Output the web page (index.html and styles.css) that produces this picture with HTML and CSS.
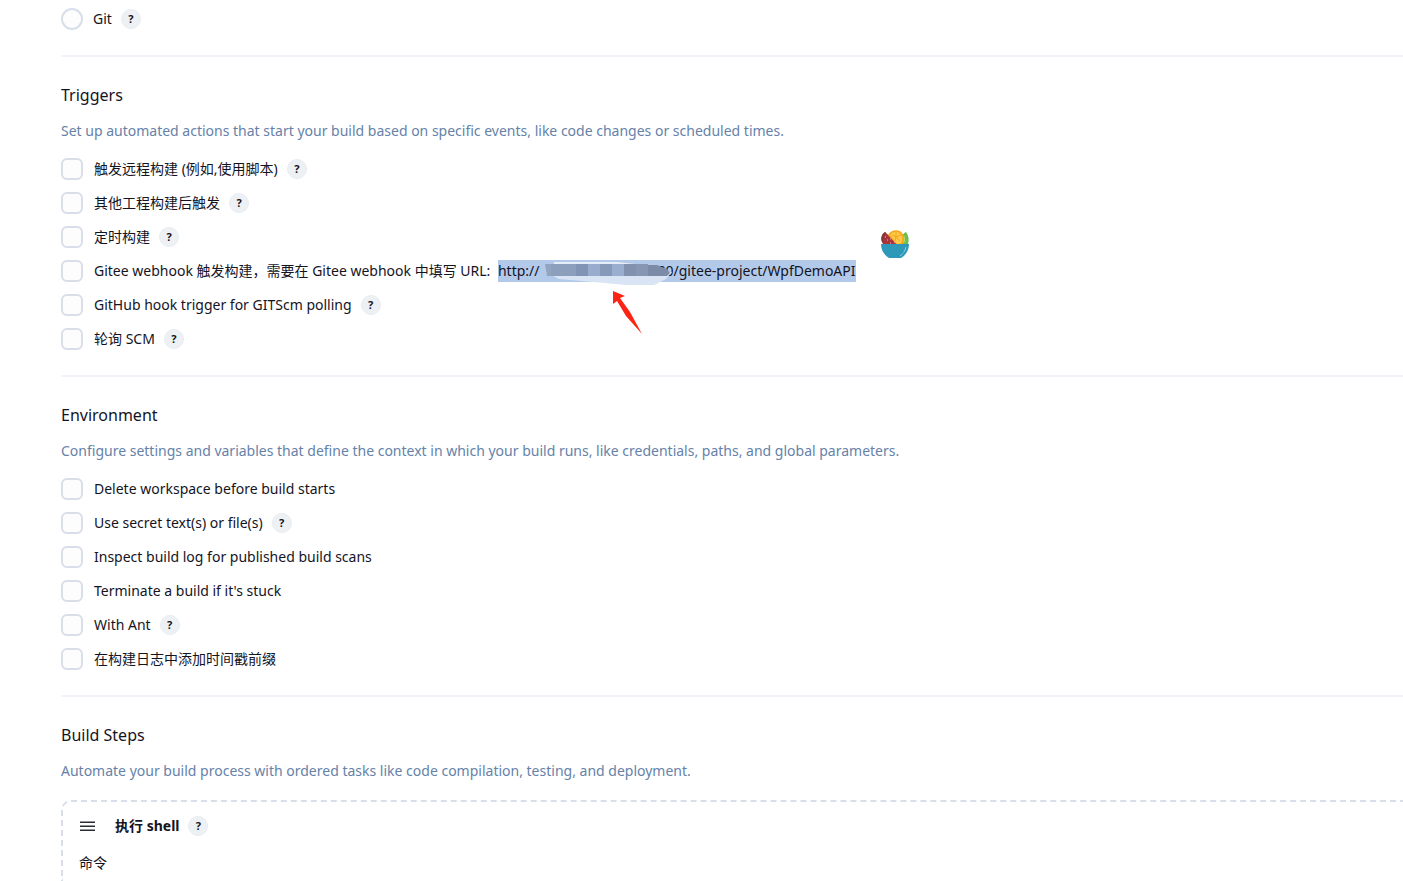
FILE: index.html
```html
<!DOCTYPE html>
<html lang="zh-CN">
<head>
    <meta charset="UTF-8">
    <meta name="viewport" content="width=device-width, initial-scale=1.0">
    <title>Config</title>
    <link rel="stylesheet" href="styles.css">
</head>
<body>
    <main class="config">
        <div class="scm">
            <div class="option">
                <input type="radio" class="radio" id="scm-git" name="scm">
                <label for="scm-git">Git</label>
                <button type="button" class="help">?</button>
            </div>
        </div>

        <section class="section">
            <h2 class="section-title">Triggers</h2>
            <p class="section-desc">Set up automated actions that start your build based on specific events, like code changes or scheduled times.</p>
            <div class="options">
                <div class="option">
                    <input type="checkbox" class="checkbox" id="remote">
                    <label for="remote">触发远程构建 (例如,使用脚本)</label>
                    <button type="button" class="help">?</button>
                </div>
                <div class="option">
                    <input type="checkbox" class="checkbox" id="upstream">
                    <label for="upstream">其他工程构建后触发</label>
                    <button type="button" class="help">?</button>
                </div>
                <div class="option">
                    <input type="checkbox" class="checkbox" id="timer">
                    <label for="timer">定时构建</label>
                    <button type="button" class="help">?</button>
                </div>
                <div class="option">
                    <input type="checkbox" class="checkbox" id="gitee">
                    <label for="gitee">Gitee webhook 触发构建，需要在 Gitee webhook 中填写 URL: <span class="url">http://<span class="masked"></span>80/gitee-project/WpfDemoAPI<svg class="mosaic" width="128" height="26" viewBox="0 0 128 26">
                        <path d="M9 2h63l18 2h-81z" fill="#e6edf8"/>
                        <path d="M0 12l14 7 34 3 34 3h27l12-6 6-7z" fill="#d9e4f5"/>
                        <path d="M0 4h6v12H2z" fill="#93a4c0"/>
                        <path d="M6 4h25v12H6z" fill="#8c9fbd"/>
                        <path d="M31 4h12v12H31z" fill="#8294b4"/>
                        <path d="M43 4h12v12H43z" fill="#99acce"/>
                        <path d="M55 4h12v12H55z" fill="#8799b8"/>
                        <path d="M67 4h12v12H67z" fill="#9aaed0"/>
                        <path d="M79 4h12v12H79z" fill="#8191ae"/>
                        <path d="M91 4h12v12H91z" fill="#8696b3"/>
                        <path d="M103 5h9l10 4 3 4-3 3h-19z" fill="#7b8ba8"/>
                    </svg><svg class="arrow" width="32" height="46" viewBox="0 0 32 46">
                        <path d="M1 1l12 5-5 2 10 14 12 22-16-18L5 11l-4 3z" fill="#fc2414"/>
                    </svg><svg class="bowl" width="28" height="30" viewBox="0 0 28 30">
                        <path d="M2 15C-1 9 1 5 4 3l14 13z" fill="#a8343c"/>
                        <path d="M1 13C-1 9 1 5 4 3l1 1C2 7 2 10 3 15z" fill="#7c3a3a"/>
                        <path d="M19 15c0-6 2-10 6-12 3 4 3 8 2 12z" fill="#6bbd50"/>
                        <path d="M23 7l1 6M21 10l2 4" stroke="#b7e27e" fill="none"/>
                        <path d="M7 6c3-6 14-7 16 2 1 3-1 6-2 8h-5z" fill="#f7a81b"/>
                        <path d="M9 6c3-4 10-5 12 2 1 3-1 5-2 7h-3z" fill="#ffca4a"/>
                        <path d="M15 3v5l-4-2m4 2l5-2m-5 2l4 4m-4-4l-1 4" stroke="#f3a51b" fill="none"/>
                        <path d="M4 8h1m1 3h1m2-1h1m-1 4h1m3-1h1" stroke="#f2b5ac"/>
                        <path d="M0 15h28c0 6-3 11-8 14H8C3 26 0 21 0 15z" fill="#2d98b8"/>
                        <path d="M25 18c-1 4-3 7-6 9" stroke="#8fd0df" fill="none" stroke-dasharray="6 1"/>
                    </svg></span></label>
                </div>
                <div class="option">
                    <input type="checkbox" class="checkbox" id="github">
                    <label for="github">GitHub hook trigger for GITScm polling</label>
                    <button type="button" class="help">?</button>
                </div>
                <div class="option">
                    <input type="checkbox" class="checkbox" id="poll">
                    <label for="poll">轮询 SCM</label>
                    <button type="button" class="help">?</button>
                </div>
            </div>
        </section>

        <section class="section">
            <h2 class="section-title">Environment</h2>
            <p class="section-desc">Configure settings and variables that define the context in which your build runs, like credentials, paths, and global parameters.</p>
            <div class="options">
                <div class="option">
                    <input type="checkbox" class="checkbox" id="cleanup">
                    <label for="cleanup">Delete workspace before build starts</label>
                </div>
                <div class="option">
                    <input type="checkbox" class="checkbox" id="secret">
                    <label for="secret">Use secret text(s) or file(s)</label>
                    <button type="button" class="help">?</button>
                </div>
                <div class="option">
                    <input type="checkbox" class="checkbox" id="scans">
                    <label for="scans">Inspect build log for published build scans</label>
                </div>
                <div class="option">
                    <input type="checkbox" class="checkbox" id="stuck">
                    <label for="stuck">Terminate a build if it's stuck</label>
                </div>
                <div class="option">
                    <input type="checkbox" class="checkbox" id="ant">
                    <label for="ant">With Ant</label>
                    <button type="button" class="help">?</button>
                </div>
                <div class="option">
                    <input type="checkbox" class="checkbox" id="timestamps">
                    <label for="timestamps">在构建日志中添加时间戳前缀</label>
                </div>
            </div>
        </section>

        <section class="section section-steps">
            <h2 class="section-title">Build Steps</h2>
            <p class="section-desc">Automate your build process with ordered tasks like code compilation, testing, and deployment.</p>
            <div class="step">
                <div class="step-header">
                    <svg class="handle" width="18" height="18" viewBox="0 0 18 18">
                        <path d="M1 5.2h15M1 9.2h15M1 13.2h15" stroke="#2b2b38" stroke-width="1.5" fill="none"/>
                    </svg>
                    <h3 class="step-title">执行 shell</h3>
                    <button type="button" class="help">?</button>
                </div>
                <div class="step-label">命令</div>
            </div>
        </section>
    </main>
</body>
</html>
```
FILE: styles.css
```css
* {
    box-sizing: border-box;
}
body {
    margin: 0;
    background-color: #fff;
    color: #14141f;
    font-family: "Noto Sans", "Noto Sans CJK SC", sans-serif;
    font-size: 14px;
    line-height: 22px;
}
.config {
    display: flex;
    flex-direction: column;
    height: 100vh;
    padding-left: 61px;
    overflow: hidden;
}
.scm {
    padding: 8px 0 25px;
}
.section {
    flex-shrink: 0;
    border-top: 2px solid #f2f2f8;
    padding: 26px 0 25px;
}
.section-title {
    margin: 0 0 13px;
    font-size: 16px;
    font-weight: 400;
    line-height: 24px;
}
.section-desc {
    margin: 0 0 16px;
    color: #6682a8;
}
.options {
    display: flex;
    flex-direction: column;
    gap: 12px;
}
.option {
    display: flex;
    align-items: center;
    height: 22px;
    white-space: nowrap;
}
.checkbox, .radio {
    appearance: none;
    flex-shrink: 0;
    width: 22px;
    height: 22px;
    margin: 0 11px 0 0;
    border: 2px solid #d8deea;
    border-radius: 6px;
    background-color: #fdfdfe;
}
.radio {
    margin-right: 10px;
    border-radius: 50%;
}
.help {
    flex-shrink: 0;
    width: 20px;
    height: 20px;
    margin-left: 9px;
    padding: 0;
    border: 1px solid #e8ecf1;
    border-radius: 50%;
    background-color: #eef1f4;
    color: #14141f;
    font-family: inherit;
    font-size: 11px;
    font-weight: 700;
    line-height: 18px;
    text-align: center;
}
.url {
    display: inline-block;
    position: relative;
    height: 22px;
    margin-left: 4px;
    background-color: #b3c9ea;
}
.masked {
    display: inline-block;
    width: 118px;
}
.mosaic {
    position: absolute;
    top: 0;
    left: 47px;
}
.arrow {
    position: absolute;
    top: 30px;
    left: 114px;
}
.bowl {
    position: absolute;
    right: -53px;
    bottom: 23px;
}
.section-steps {
    display: flex;
    flex: 1;
    flex-direction: column;
    padding-bottom: 0;
}
.step {
    flex: 1;
    margin-top: 2px;
    padding: 13px 16px 0;
    border: 2px dashed #d8deea;
    border-right: none;
    border-bottom: none;
    border-radius: 10px 0 0 0;
}
.step-header {
    display: flex;
    align-items: center;
    margin-bottom: 15px;
}
.handle {
    margin-right: 18px;
}
.step-title {
    margin: 0;
    font-size: 14px;
    font-weight: 700;
}
```
